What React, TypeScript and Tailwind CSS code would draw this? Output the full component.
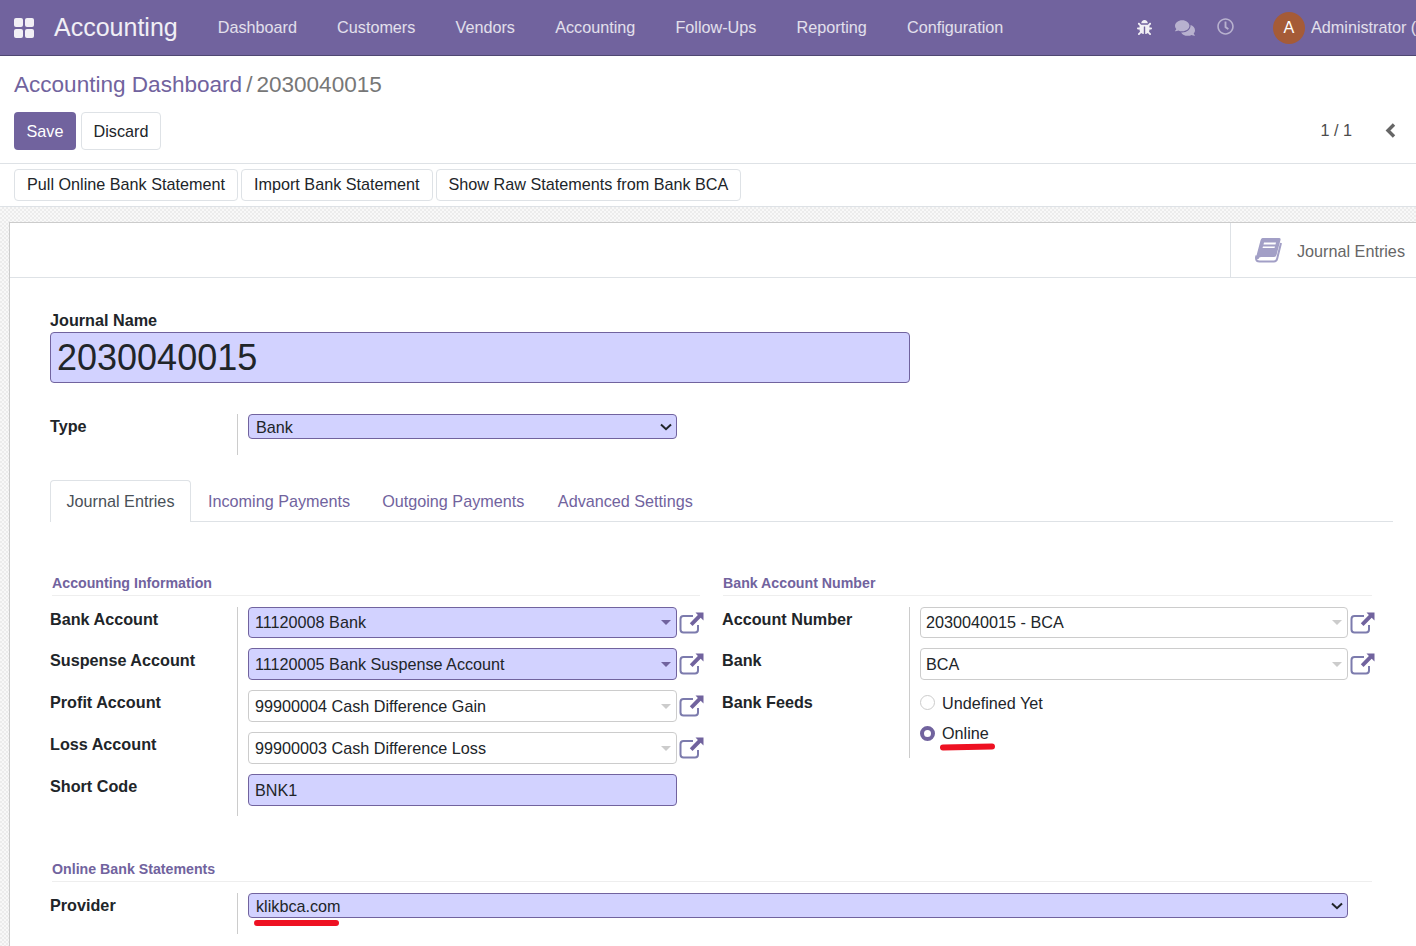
import { FaBug, FaComments, FaRegClock } from "react-icons/fa";

const navItems = ["Dashboard", "Customers", "Vendors", "Accounting", "Follow-Ups", "Reporting", "Configuration"];

function ExternalLink() {
  return (
    <svg width="25" height="22" viewBox="0 0 25 22" className="-mr-[4px] shrink-0 text-[#7c7bad]" fill="none">
      <path d="M14 4H4.5A3 3 0 0 0 1.5 7v10.500a3 3 0 0 0 3 3H16a3 3 0 0 0 3-3V13" stroke="currentColor" strokeWidth="2" />
      <path d="M16.500 0.500H24.500V8.500L21.700 5.700L13.500 14L10.800 11.300L18.900 3Z" fill="#71639e" />
    </svg>
  );
}

function BookIcon() {
  return (
    <svg width="27" height="25" viewBox="0 0 27 25" className="shrink-0 text-[#a29fc6]" fill="none">
      <path d="M7.500 0H24Q26 0 25.500 2L21.500 17Q21 19 19 19H6Q4 19 3.500 21L1 21L1.500 17.500L5.500 2.500Q6 0 7.500 0Z" fill="currentColor" />
      <path d="M26 5L22.200 20.500Q21.500 23.500 19 23.500H4.500Q1 23.500 1 20Q1 19 1.500 17.500" stroke="currentColor" strokeWidth="2" />
      <path d="M9 4.500H21L20.500 6.500H8.500Z M8 8.500H20L19.500 10H7.500Z" fill="#fff" />
    </svg>
  );
}

function SelectField({ value }: { value: string }) {
  return (
    <div className="relative">
      <select
        className="block h-[25px] w-full appearance-none rounded border border-[#71639e] bg-[#d2d2ff] pb-[3px] pl-[7px]"
        defaultValue={value}
      >
        <option>{value}</option>
      </select>
      <svg width="12" height="8" viewBox="0 0 12 8" className="pointer-events-none absolute right-[5px] top-[9px]" fill="none">
        <path d="M1 1.500L6 6.200L11 1.500" stroke="#212529" strokeWidth="2" />
      </svg>
    </div>
  );
}

function Many2One({ value, required, short, tight }: { value: string; required?: boolean; short?: boolean; tight?: boolean }) {
  return (
    <div className="flex items-center gap-[2px]">
      <div
        className={`flex flex-1 items-center justify-between rounded border pr-[5px] ${tight ? "pl-[5px]" : "pl-[6px]"} ${short ? "h-[31px]" : "h-8 pt-[1px]"} ${
          required ? "border-[#71639e] bg-[#d2d2ff]" : "border-[#cccccc] bg-white"
        }`}
      >
        <span>{value}</span>
        <span
          className={`h-0 w-0 border-x-[5px] border-t-[5px] border-x-transparent ${
            required ? "border-t-[#71639e]" : "border-t-[#cccccc]"
          }`}
        />
      </div>
      <ExternalLink />
    </div>
  );
}

function Row({ label, children }: { label: string; children: React.ReactNode }) {
  return (
    <div className="flex">
      <div className="w-[187px] shrink-0 font-bold text-[#212529]">{label}</div>
      <div className="flex-1 border-l border-[#cccccc] pb-[10px] pl-[10px]">{children}</div>
    </div>
  );
}

function GroupTitle({ children }: { children: React.ReactNode }) {
  return (
    <div className="mb-[11px] h-[22px] border-b border-[#eeeeee] text-[14.2px] font-bold leading-[19px] text-[#71639e]">
      {children}
    </div>
  );
}

export default function App() {
  return (
    <div className="flex h-[946px] w-[1416px] flex-col overflow-hidden bg-white font-['Liberation_Sans',sans-serif] text-[16.2px] text-[#212529]">
      <header className="flex h-[56px] shrink-0 items-center border-b border-[#4f4772] bg-[#71639e] text-white/80">
        <div className="ml-[14px] grid h-[20px] w-[20px] grid-cols-2 gap-[2px]">
          <span className="rounded-[2px] bg-white/90" />
          <span className="rounded-[2px] bg-white/90" />
          <span className="rounded-[2px] bg-white/90" />
          <span className="rounded-[2px] bg-white/90" />
        </div>
        <div className="ml-[20px] mr-[40px] text-[25px] text-white/90">Accounting</div>
        <nav className="flex gap-[40.2px]">
          {navItems.map((item) => (
            <span key={item}>{item}</span>
          ))}
        </nav>
        <div className="ml-auto flex items-center whitespace-nowrap">
          <FaBug className="h-[15px] w-[15px] text-white/90" />
          <FaComments className="ml-[23px] h-[20px] w-[20px] text-white/50" />
          <FaRegClock className="ml-[22px] mb-[2px] h-[17px] w-[17px] text-white/50" />
          <div className="ml-[39px] flex h-8 w-8 items-center justify-center rounded-full bg-[#a55b37] text-white">A</div>
          <span className="ml-[6px] w-[105px] overflow-hidden">Administrator (</span>
        </div>
      </header>

      <div className="flex h-[108px] shrink-0 flex-col border-b border-[#dee2e6] px-[14px]">
        <div className="mt-[15px] text-[22.55px] leading-[28px]">
          <span className="text-[#71639e]">Accounting Dashboard</span>
          <span className="mx-[4px] text-[#777777]">/</span>
          <span className="text-[#777777]">2030040015</span>
        </div>
        <div className="mt-[13px] flex items-center">
          <button className="h-[38px] w-[62px] rounded bg-[#71639e] pt-[1px] text-white">Save</button>
          <button className="ml-[5px] h-[38px] w-[80px] rounded border border-[#dee2e6] pt-[1px] text-[#212529]">Discard</button>
          <span className="mb-[1px] ml-auto text-[#4c4c4c]">1 / 1</span>
          <svg width="11" height="15" viewBox="0 0 11 15" className="mb-[1px] ml-[33px] mr-[6px]" fill="none">
            <path d="M9 1.500L3 7.500L9 13.500" stroke="#666666" strokeWidth="3.400" />
          </svg>
        </div>
      </div>

      <div className="flex h-[43px] shrink-0 items-start gap-[3px] border-b border-[#dee2e6] px-[14px] pt-[5px]">
        <button className="h-[32px] rounded border border-[#dee2e6] px-3 pb-[2px]">Pull Online Bank Statement</button>
        <button className="h-[32px] rounded border border-[#dee2e6] px-3 pb-[2px]">Import Bank Statement</button>
        <button className="h-[32px] rounded border border-[#dee2e6] px-3 pb-[2px]">Show Raw Statements from Bank BCA</button>
      </div>

      <main className="flex-1 bg-[#f4f4f4] bg-[repeating-conic-gradient(#ececec_0%_25%,#f8f8f8_0%_50%)] bg-[length:4px_4px] pl-[9px] pt-[15px]">
        <div className="h-[800px] border-l border-t border-[#cccccc] bg-white">
          <div className="flex h-[55px] justify-end border-b border-[#dee2e6]">
            <div className="flex w-[186px] items-center border-l border-[#dee2e6] pl-[24px] text-[#666666]">
              <BookIcon />
              <span className="ml-[15px] whitespace-nowrap pt-[3px]">Journal Entries</span>
            </div>
          </div>

          <div className="w-[1383px] pl-[40px]">
            <div className="mt-[32px] h-[22px] font-bold leading-[21px]">Journal Name</div>
            <div className="flex h-[51px] w-[860px] items-center rounded border border-[#71639e] bg-[#d2d2ff] px-[6px] text-[36px]">
              2030040015
            </div>

            <div className="mt-[31px]">
              <Row label="Type">
                <div className="h-[31px] w-[429px]">
                  <SelectField value="Bank" />
                </div>
              </Row>
            </div>

            <div className="mt-[25px] flex h-[42px] items-end border-b border-[#dee2e6]">
              <div className="-mb-px flex h-[42px] w-[141px] items-center justify-center rounded-t border-x border-t border-[#dee2e6] bg-white text-[#495057]">
                Journal Entries
              </div>
              <div className="flex h-[42px] items-center gap-[32px] pl-[17px] pt-[2px] text-[#71639e]">
                <span>Incoming Payments</span>
                <span>Outgoing Payments</span>
                <span className="ml-[1.500px]">Advanced Settings</span>
              </div>
            </div>

            <div className="mt-[52px] flex">
              <div className="w-[650px]">
                <div className="pl-[2px]">
                  <GroupTitle>Accounting Information</GroupTitle>
                </div>
                <Row label="Bank Account">
                  <Many2One value="11120008 Bank" required short />
                </Row>
                <Row label="Suspense Account">
                  <Many2One value="11120005 Bank Suspense Account" required />
                </Row>
                <Row label="Profit Account">
                  <Many2One value="99900004 Cash Difference Gain" />
                </Row>
                <Row label="Loss Account">
                  <Many2One value="99900003 Cash Difference Loss" />
                </Row>
                <Row label="Short Code">
                  <div className="mr-[23px] flex h-8 items-center rounded border border-[#71639e] bg-[#d2d2ff] pl-[6px] pt-[1px]">BNK1</div>
                </Row>
              </div>
              <div className="ml-[22px] w-[649px]">
                <div className="-mr-[1px] pl-[1px]">
                  <GroupTitle>Bank Account Number</GroupTitle>
                </div>
                <Row label="Account Number">
                  <Many2One value="2030040015 - BCA" short tight />
                </Row>
                <Row label="Bank">
                  <Many2One value="BCA" tight />
                </Row>
                <Row label="Bank Feeds">
                  <div className="flex h-[58px] flex-col">
                    <label className="flex h-[24px] items-center gap-[7px]">
                      <span className="h-[15px] w-[15px] rounded-full border border-[#cccccc]" />
                      <span className="pt-[2px]">Undefined Yet</span>
                    </label>
                    <label className="relative mt-[7px] flex h-[24px] items-center gap-[7px]">
                      <span className="h-[15px] w-[15px] rounded-full border-[4px] border-[#71639e] bg-white" />
                      <span className="pt-[1px]">Online</span>
                      <span className="absolute left-[20px] top-[23px] h-[6px] w-[55px] -rotate-1 rounded-full bg-[#ee1122]" />
                    </label>
                  </div>
                </Row>
              </div>
            </div>

            <div className="mt-[44px] w-[1322px]">
              <div className="pl-[2px]">
                <GroupTitle>Online Bank Statements</GroupTitle>
              </div>
              <Row label="Provider">
                <div className="relative h-[31px] w-[1100px]">
                  <SelectField value="klikbca.com" />
                  <span className="absolute left-[6px] top-[27px] h-[6px] w-[85px] rounded-full bg-[#ee1122]" />
                </div>
              </Row>
            </div>
          </div>
        </div>
      </main>
    </div>
  );
}
